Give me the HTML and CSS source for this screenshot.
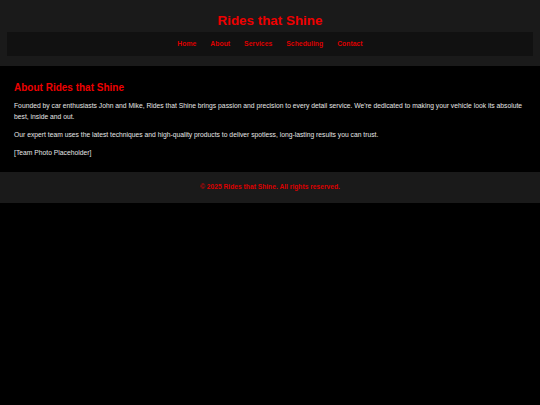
FILE: index.html
```html
<!DOCTYPE html>
<html lang="en">
<head>
    <meta charset="UTF-8">
    <meta name="viewport" content="width=device-width, initial-scale=1.0">
    <title>About - Rides that Shine</title>
    <link rel="stylesheet" href="styles.css">
</head>
<body>

    <header class="site-header">
        <h1>Rides that Shine</h1>
        <nav class="main-nav">
            <a href="#">Home</a>
            <a href="#">About</a>
            <a href="#">Services</a>
            <a href="#">Scheduling</a>
            <a href="#">Contact</a>
        </nav>
    </header>

    <!-- About section -->
    <main class="content">
        <h2>About Rides that Shine</h2>
        <p>Founded by car enthusiasts John and Mike, Rides that Shine brings passion and precision to every detail service. We're dedicated to making your vehicle look its absolute best, inside and out.</p>
        <p>Our expert team uses the latest techniques and high-quality products to deliver spotless, long-lasting results you can trust.</p>
        <p>[Team Photo Placeholder]</p>
    </main>

    <footer class="site-footer">
        <p>&copy; 2025 Rides that Shine. All rights reserved.</p>
    </footer>

</body>
</html>
```

FILE: styles.css
```css
body {
    font-family: "Liberation Sans", Arial, sans-serif;
    background-color: #000;
    color: #e6e6e6;
    margin: 0;
}
.site-header {
    background: #1a1a1a;
    padding: 13px 7px 10px;
    text-align: center;
}
.site-header h1 {
    margin: 0 0 4px;
    font-size: 13.4px;
    line-height: 15px;
    color: #e00;
}
.main-nav {
    background: #111;
    display: flex;
    justify-content: center;
    gap: 14px;
    padding: 8px 0;
}
.main-nav a {
    color: #d00;
    font-size: 6.85px;
    line-height: 8px;
    font-weight: bold;
    text-decoration: none;
}
.content {
    padding: 16px 14px 14px;
}
.content h2 {
    margin: 0 0 6px;
    font-size: 10px;
    line-height: 12px;
    color: #e00;
}
.content p {
    margin: 0 0 6.5px;
    font-size: 6.76px;
    line-height: 11.2px;
}
.content p:last-child {
    margin-bottom: 0;
}
.site-footer {
    background: #1a1a1a;
    padding: 11.5px 0;
    text-align: center;
}
.site-footer p {
    margin: 0;
    color: #d00;
    font-size: 6.7px;
    line-height: 8px;
    font-weight: bold;
}
```
